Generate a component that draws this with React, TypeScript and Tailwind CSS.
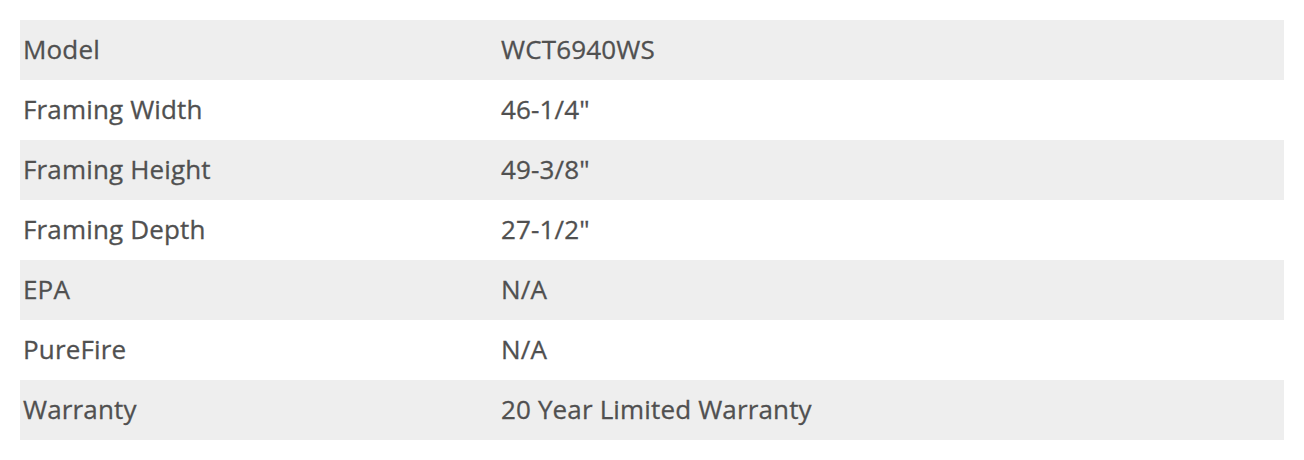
const rows: [string, string][] = [
  ['Model', 'WCT6940WS'],
  ['Framing Width', '46-1/4"'],
  ['Framing Height', '49-3/8"'],
  ['Framing Depth', '27-1/2"'],
  ['EPA', 'N/A'],
  ['PureFire', 'N/A'],
  ['Warranty', '20 Year Limited Warranty'],
]

export default function App() {
  return (
    <div className="min-h-[460px] bg-white px-5 py-5 font-['Open_Sans',sans-serif]">
      <table className="w-full border-collapse text-[26px] font-medium tracking-[0.15px] text-[#505050] [-webkit-text-stroke:0.3px_#505050]">
        <tbody>
          {rows.map(([label, value], i) => (
            <tr key={label} className={i % 2 === 0 ? 'h-[60px] bg-[#eeeeee]' : 'h-[60px] bg-white'}>
              <td className="w-[478px] px-[3px] pb-[2px] align-middle">{label}</td>
              <td className="px-[3px] pb-[2px] align-middle">{value}</td>
            </tr>
          ))}
        </tbody>
      </table>
    </div>
  )
}
